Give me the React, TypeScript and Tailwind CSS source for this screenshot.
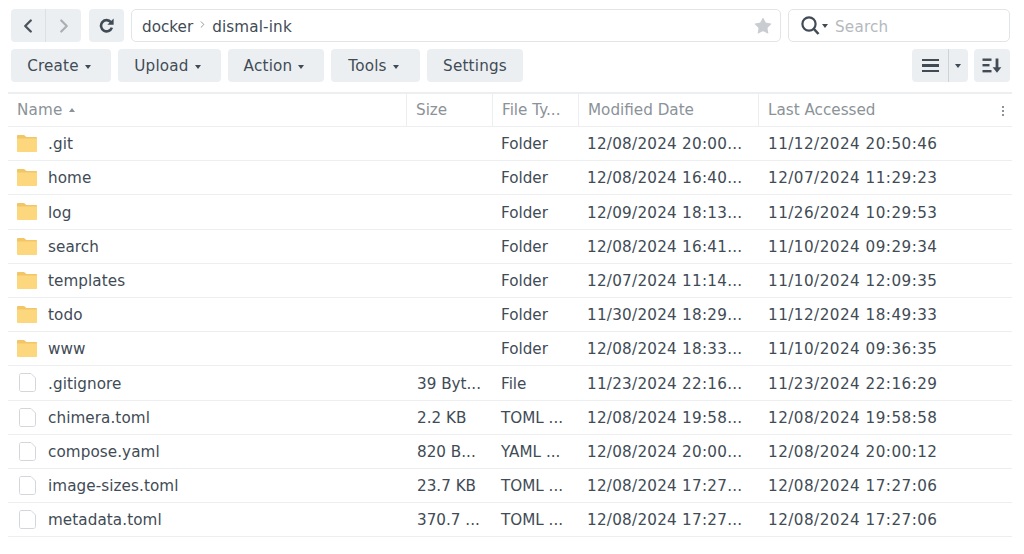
import { ChevronLeft, ChevronRight, Star } from 'lucide-react';

const rows = [
  { name: '.git', size: '', type: 'Folder', modified: '12/08/2024 20:00...', accessed: '11/12/2024 20:50:46', folder: true },
  { name: 'home', size: '', type: 'Folder', modified: '12/08/2024 16:40...', accessed: '12/07/2024 11:29:23', folder: true },
  { name: 'log', size: '', type: 'Folder', modified: '12/09/2024 18:13...', accessed: '11/26/2024 10:29:53', folder: true },
  { name: 'search', size: '', type: 'Folder', modified: '12/08/2024 16:41...', accessed: '11/10/2024 09:29:34', folder: true },
  { name: 'templates', size: '', type: 'Folder', modified: '12/07/2024 11:14...', accessed: '11/10/2024 12:09:35', folder: true },
  { name: 'todo', size: '', type: 'Folder', modified: '11/30/2024 18:29...', accessed: '11/12/2024 18:49:33', folder: true },
  { name: 'www', size: '', type: 'Folder', modified: '12/08/2024 18:33...', accessed: '11/10/2024 09:36:35', folder: true },
  { name: '.gitignore', size: '39 Byt...', type: 'File', modified: '11/23/2024 22:16...', accessed: '11/23/2024 22:16:29', folder: false },
  { name: 'chimera.toml', size: '2.2 KB', type: 'TOML ...', modified: '12/08/2024 19:58...', accessed: '12/08/2024 19:58:58', folder: false },
  { name: 'compose.yaml', size: '820 B...', type: 'YAML ...', modified: '12/08/2024 20:00...', accessed: '12/08/2024 20:00:12', folder: false },
  { name: 'image-sizes.toml', size: '23.7 KB', type: 'TOML ...', modified: '12/08/2024 17:27...', accessed: '12/08/2024 17:27:06', folder: false },
  { name: 'metadata.toml', size: '370.7 ...', type: 'TOML ...', modified: '12/08/2024 17:27...', accessed: '12/08/2024 17:27:06', folder: false },
];

const FolderIcon = () => (
  <svg width="20" height="17" viewBox="0 0 20 17" className="shrink-0">
    <path d="M0 1c0-.5.4-1 1-1h5.6c.4 0 .7.1 1 .4L9.4 2H19c.6 0 1 .4 1 1v2H0z" fill="#f2c566" />
    <path d="M0 3.6h20V16c0 .6-.4 1-1 1H1c-.6 0-1-.4-1-1z" fill="#fcd77e" />
  </svg>
);

const FileIcon = () => (
  <svg width="17" height="19" viewBox="0 0 17 19" className="shrink-0">
    <path d="M2 .5h10l4.5 4.5v11.5c0 1.1-.9 2-2 2H2c-.9 0-1.5-.9-1.5-2v-14C.5 1.4 1.1.5 2 .5z" fill="#fff" stroke="#d3d6da" />
  </svg>
);

const Caret = ({ className = '' }: { className?: string }) => (
  <span className={`inline-block w-0 h-0 border-x-[3.5px] border-x-transparent border-t-[4px] border-t-[#3f4a54] ${className}`} />
);

const ToolButton = ({ label, width, caret = true }: { label: string; width: string; caret?: boolean }) => (
  <button className={`${width} h-[33px] pt-[2px] ${caret ? 'pr-[4px]' : ''} bg-[#eceff2] rounded-[4px] flex items-center justify-center gap-[6px] text-[#414b55] tracking-[0.2px]`}>
    {label}
    {caret && <Caret />}
  </button>
);

export default function App() {
  return (
    <div className="w-[1024px] h-[554px] bg-white overflow-hidden text-[15.2px] text-[#414b55] font-['DejaVu_Sans',sans-serif]">
      <div className="pl-[11px] pr-[14px] pt-[9px]">
        {/* Top bar */}
        <div className="flex items-center h-[33px]">
          <div className="flex w-[70px] h-[33px] bg-[#eceff2] rounded-[4px]">
            <div className="w-[35px] flex items-center justify-center border-r border-[#dcdfe3]">
              <ChevronLeft size={22} strokeWidth={2.6} className="text-[#4a545e]" />
            </div>
            <div className="w-[35px] flex items-center justify-center">
              <ChevronRight size={22} strokeWidth={2.4} className="text-[#a9afb5]" />
            </div>
          </div>
          <div className="w-[35px] h-[33px] ml-[8px] bg-[#eceff2] rounded-[4px] flex items-center justify-center">
            <svg width="15" height="15" viewBox="0 0 15 15" fill="none">
              <path d="M12 4.2A5.6 5.6 0 1 0 12.9 9.6" stroke="#414b55" strokeWidth="2.6" />
              <path d="M14.6 0.6v6.2H8.4z" fill="#414b55" />
            </svg>
          </div>
          <div className="w-[650px] h-[33px] ml-[7px] border border-[#e2e5e8] rounded-[5px] flex items-center pl-[10px] pr-[7px]">
            <span className="pt-[3px]">docker</span>
            <ChevronRight size={11} strokeWidth={1.6} className="mx-[4px] mb-[2px] text-[#6d757d]" />
            <span className="pt-[3px] tracking-[0.15px]">dismal-ink</span>
            <Star size={20} fill="#c9cdd2" strokeWidth={0} className="ml-auto" />
          </div>
          <div className="w-[222px] h-[33px] ml-[7px] border border-[#e2e5e8] rounded-[5px] flex items-center pl-[12px]">
            <svg width="19" height="19" viewBox="0 0 19 19" fill="none">
              <circle cx="8" cy="8" r="6.6" stroke="#414b55" strokeWidth="2.2" />
              <path d="M12.5 12.5L17.5 18" stroke="#414b55" strokeWidth="2.6" />
            </svg>
            <Caret className="ml-[2px]" />
            <span className="ml-[7px] pt-[3px] text-[#b4b9be] tracking-[0.2px]">Search</span>
          </div>
        </div>

        {/* Action bar */}
        <div className="flex items-center h-[33px] mt-[7px]">
          <div className="flex gap-[7px]">
            <ToolButton label="Create" width="w-[100px]" />
            <ToolButton label="Upload" width="w-[103px]" />
            <ToolButton label="Action" width="w-[96px]" />
            <ToolButton label="Tools" width="w-[89px]" />
            <ToolButton label="Settings" width="w-[96px]" caret={false} />
          </div>
          <div className="ml-auto flex gap-[6px]">
            <div className="flex w-[56px] h-[33px] bg-[#eceff2] rounded-[4px]">
              <div className="w-[37px] flex flex-col items-center justify-center gap-[3px] border-r border-[#cfd3d7]">
                <span className="w-[17px] h-[2.5px] bg-[#414b55]" />
                <span className="w-[17px] h-[2.5px] bg-[#414b55]" />
                <span className="w-[17px] h-[2.5px] bg-[#414b55]" />
              </div>
              <div className="flex-1 flex items-center justify-center pr-[2px]">
                <Caret />
              </div>
            </div>
            <div className="w-[36px] h-[33px] bg-[#eceff2] rounded-[4px] flex items-center justify-center">
              <svg width="20" height="15" viewBox="0 0 20 15" fill="#414b55">
                <rect x="0.5" y="0.5" width="9" height="2.4" />
                <rect x="0.5" y="6" width="7" height="2.4" />
                <rect x="0.5" y="12" width="9" height="2.4" />
                <path d="M13.6 0.5h2.8v8.7H19.4L15 14.8 10.6 9.2h3z" />
              </svg>
            </div>
          </div>
        </div>
      </div>

      {/* Table */}
      <div className="ml-[8px] w-[1004px] mt-[10px] border-t-2 border-[#eceef0]">
        <div className="flex h-[33px] border-b border-[#eceef0] text-[#8b9298]">
          <div className="w-[398px] pl-[9px] pt-[1px] flex items-center gap-[6px] tracking-[0.2px]">
            Name
            <span className="inline-block w-0 h-0 mb-[2px] border-x-[3.5px] border-x-transparent border-b-[4px] border-b-[#8b9298]" />
          </div>
          <div className="w-[86px] pl-[9px] pt-[1px] flex items-center border-l border-[#eceef0]">Size</div>
          <div className="w-[86px] pl-[9px] pt-[1px] flex items-center border-l border-[#eceef0]">File Ty...</div>
          <div className="w-[180px] pl-[9px] pt-[1px] flex items-center border-l border-[#eceef0]">Modified Date</div>
          <div className="flex-1 pl-[9px] pr-[8px] pt-[1px] flex items-center justify-between border-l border-[#eceef0]">
            Last Accessed
            <span className="flex flex-col gap-[2px]">
              <span className="w-[2px] h-[2px] bg-[#8b9298]" />
              <span className="w-[2px] h-[2px] bg-[#8b9298]" />
              <span className="w-[2px] h-[2px] bg-[#8b9298]" />
            </span>
          </div>
        </div>
        {rows.map((row) => (
          <div key={row.name} className="flex items-center h-[34.2px] border-b border-[#eceef0]">
            <div className="w-[398px] flex items-center">
              <div className="w-[40px] flex justify-center pr-[2px]">
                {row.folder ? <FolderIcon /> : <FileIcon />}
              </div>
              <span className="pt-[2px] tracking-[0.08px]">{row.name}</span>
            </div>
            <div className="w-[86px] pl-[11px] pt-[2px]">{row.size}</div>
            <div className="w-[86px] pl-[9px] pt-[2px]">{row.type}</div>
            <div className="w-[180px] pl-[9px] pt-[2px] tracking-[0.25px]">{row.modified}</div>
            <div className="flex-1 pl-[10px] pt-[2px] tracking-[0.47px]">{row.accessed}</div>
          </div>
        ))}
      </div>
    </div>
  );
}
